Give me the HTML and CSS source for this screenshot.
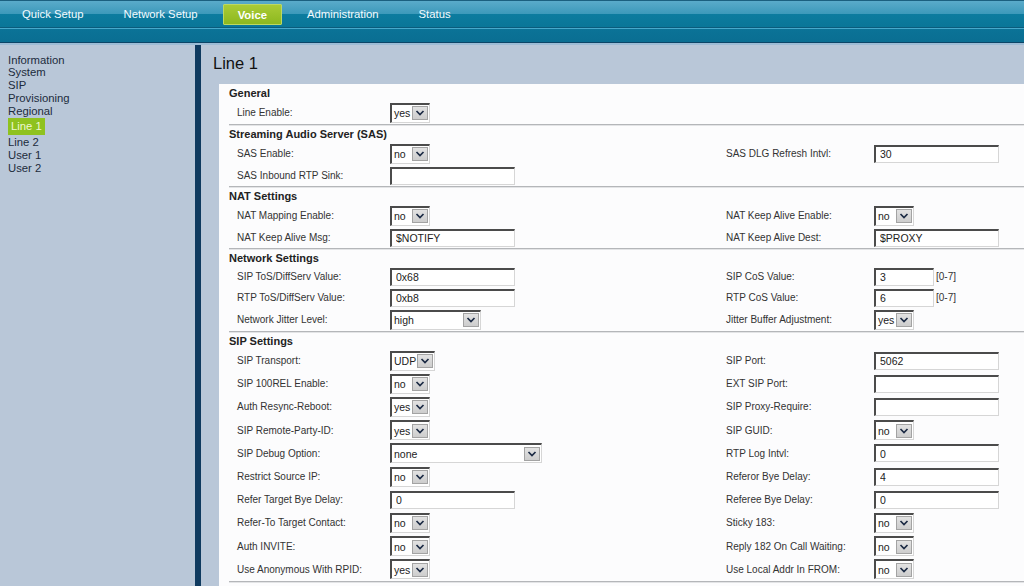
FILE: index.html
```html
<!DOCTYPE html>
<html>
<head>
<meta charset="utf-8">
<title>Line 1</title>
<link rel="stylesheet" href="styles.css">
</head>
<body>
<header class="topbar">
  <nav class="nav">
    <span class="nav-item">Quick Setup</span>
    <span class="nav-item">Network Setup</span>
    <span class="nav-item active">Voice</span>
    <span class="nav-item">Administration</span>
    <span class="nav-item">Status</span>
  </nav>
</header>
<div class="layout">
  <aside class="sidebar">
    <a class="side-link">Information</a>
    <a class="side-link">System</a>
    <a class="side-link">SIP</a>
    <a class="side-link">Provisioning</a>
    <a class="side-link">Regional</a>
    <a class="side-link current">Line 1</a>
    <a class="side-link">Line 2</a>
    <a class="side-link">User 1</a>
    <a class="side-link">User 2</a>
  </aside>
  <main class="main">
    <h1 class="title">Line 1</h1>
    <div class="panel">

      <section class="section">
        <h2 class="sec-head">General</h2>
        <div class="row">
          <span class="label">Line Enable:</span>
          <span class="ctl"><span class="sel w40"><span class="val">yes</span><span class="btn"><svg viewBox="0 0 14 12" width="14" height="12"><path d="M3.5 4 L7 7.5 L10.5 4" fill="none" stroke="#1b2a44" stroke-width="1.7"/></svg></span></span></span>
          <span class="label"></span><span class="ctl"></span>
        </div>
      </section>

      <section class="section">
        <h2 class="sec-head">Streaming Audio Server (SAS)</h2>
        <div class="row">
          <span class="label">SAS Enable:</span>
          <span class="ctl"><span class="sel w40"><span class="val">no</span><span class="btn"><svg viewBox="0 0 14 12" width="14" height="12"><path d="M3.5 4 L7 7.5 L10.5 4" fill="none" stroke="#1b2a44" stroke-width="1.7"/></svg></span></span></span>
          <span class="label">SAS DLG Refresh Intvl:</span>
          <span class="ctl"><input class="inp" value="30"></span>
        </div>
        <div class="row">
          <span class="label">SAS Inbound RTP Sink:</span>
          <span class="ctl"><input class="inp" value=""></span>
          <span class="label"></span><span class="ctl"></span>
        </div>
      </section>

      <section class="section">
        <h2 class="sec-head">NAT Settings</h2>
        <div class="row">
          <span class="label">NAT Mapping Enable:</span>
          <span class="ctl"><span class="sel w40"><span class="val">no</span><span class="btn"><svg viewBox="0 0 14 12" width="14" height="12"><path d="M3.5 4 L7 7.5 L10.5 4" fill="none" stroke="#1b2a44" stroke-width="1.7"/></svg></span></span></span>
          <span class="label">NAT Keep Alive Enable:</span>
          <span class="ctl"><span class="sel w40"><span class="val">no</span><span class="btn"><svg viewBox="0 0 14 12" width="14" height="12"><path d="M3.5 4 L7 7.5 L10.5 4" fill="none" stroke="#1b2a44" stroke-width="1.7"/></svg></span></span></span>
        </div>
        <div class="row">
          <span class="label">NAT Keep Alive Msg:</span>
          <span class="ctl"><input class="inp" value="$NOTIFY"></span>
          <span class="label">NAT Keep Alive Dest:</span>
          <span class="ctl"><input class="inp" value="$PROXY"></span>
        </div>
      </section>

      <section class="section">
        <h2 class="sec-head">Network Settings</h2>
        <div class="row">
          <span class="label">SIP ToS/DiffServ Value:</span>
          <span class="ctl"><input class="inp" value="0x68"></span>
          <span class="label">SIP CoS Value:</span>
          <span class="ctl"><input class="inp short" value="3"><span class="hint">[0-7]</span></span>
        </div>
        <div class="row">
          <span class="label">RTP ToS/DiffServ Value:</span>
          <span class="ctl"><input class="inp" value="0xb8"></span>
          <span class="label">RTP CoS Value:</span>
          <span class="ctl"><input class="inp short" value="6"><span class="hint">[0-7]</span></span>
        </div>
        <div class="row">
          <span class="label">Network Jitter Level:</span>
          <span class="ctl"><span class="sel w91"><span class="val">high</span><span class="btn"><svg viewBox="0 0 14 12" width="14" height="12"><path d="M3.5 4 L7 7.5 L10.5 4" fill="none" stroke="#1b2a44" stroke-width="1.7"/></svg></span></span></span>
          <span class="label">Jitter Buffer Adjustment:</span>
          <span class="ctl"><span class="sel w40"><span class="val">yes</span><span class="btn"><svg viewBox="0 0 14 12" width="14" height="12"><path d="M3.5 4 L7 7.5 L10.5 4" fill="none" stroke="#1b2a44" stroke-width="1.7"/></svg></span></span></span>
        </div>
      </section>

      <section class="section tall">
        <h2 class="sec-head">SIP Settings</h2>
        <div class="row">
          <span class="label">SIP Transport:</span>
          <span class="ctl"><span class="sel w45"><span class="val">UDP</span><span class="btn"><svg viewBox="0 0 14 12" width="14" height="12"><path d="M3.5 4 L7 7.5 L10.5 4" fill="none" stroke="#1b2a44" stroke-width="1.7"/></svg></span></span></span>
          <span class="label">SIP Port:</span>
          <span class="ctl"><input class="inp" value="5062"></span>
        </div>
        <div class="row">
          <span class="label">SIP 100REL Enable:</span>
          <span class="ctl"><span class="sel w40"><span class="val">no</span><span class="btn"><svg viewBox="0 0 14 12" width="14" height="12"><path d="M3.5 4 L7 7.5 L10.5 4" fill="none" stroke="#1b2a44" stroke-width="1.7"/></svg></span></span></span>
          <span class="label">EXT SIP Port:</span>
          <span class="ctl"><input class="inp" value=""></span>
        </div>
        <div class="row">
          <span class="label">Auth Resync-Reboot:</span>
          <span class="ctl"><span class="sel w40"><span class="val">yes</span><span class="btn"><svg viewBox="0 0 14 12" width="14" height="12"><path d="M3.5 4 L7 7.5 L10.5 4" fill="none" stroke="#1b2a44" stroke-width="1.7"/></svg></span></span></span>
          <span class="label">SIP Proxy-Require:</span>
          <span class="ctl"><input class="inp" value=""></span>
        </div>
        <div class="row">
          <span class="label">SIP Remote-Party-ID:</span>
          <span class="ctl"><span class="sel w40"><span class="val">yes</span><span class="btn"><svg viewBox="0 0 14 12" width="14" height="12"><path d="M3.5 4 L7 7.5 L10.5 4" fill="none" stroke="#1b2a44" stroke-width="1.7"/></svg></span></span></span>
          <span class="label">SIP GUID:</span>
          <span class="ctl"><span class="sel w40"><span class="val">no</span><span class="btn"><svg viewBox="0 0 14 12" width="14" height="12"><path d="M3.5 4 L7 7.5 L10.5 4" fill="none" stroke="#1b2a44" stroke-width="1.7"/></svg></span></span></span>
        </div>
        <div class="row">
          <span class="label">SIP Debug Option:</span>
          <span class="ctl"><span class="sel w152"><span class="val">none</span><span class="btn"><svg viewBox="0 0 14 12" width="14" height="12"><path d="M3.5 4 L7 7.5 L10.5 4" fill="none" stroke="#1b2a44" stroke-width="1.7"/></svg></span></span></span>
          <span class="label">RTP Log Intvl:</span>
          <span class="ctl"><input class="inp" value="0"></span>
        </div>
        <div class="row">
          <span class="label">Restrict Source IP:</span>
          <span class="ctl"><span class="sel w40"><span class="val">no</span><span class="btn"><svg viewBox="0 0 14 12" width="14" height="12"><path d="M3.5 4 L7 7.5 L10.5 4" fill="none" stroke="#1b2a44" stroke-width="1.7"/></svg></span></span></span>
          <span class="label">Referor Bye Delay:</span>
          <span class="ctl"><input class="inp" value="4"></span>
        </div>
        <div class="row">
          <span class="label">Refer Target Bye Delay:</span>
          <span class="ctl"><input class="inp" value="0"></span>
          <span class="label">Referee Bye Delay:</span>
          <span class="ctl"><input class="inp" value="0"></span>
        </div>
        <div class="row">
          <span class="label">Refer-To Target Contact:</span>
          <span class="ctl"><span class="sel w40"><span class="val">no</span><span class="btn"><svg viewBox="0 0 14 12" width="14" height="12"><path d="M3.5 4 L7 7.5 L10.5 4" fill="none" stroke="#1b2a44" stroke-width="1.7"/></svg></span></span></span>
          <span class="label">Sticky 183:</span>
          <span class="ctl"><span class="sel w40"><span class="val">no</span><span class="btn"><svg viewBox="0 0 14 12" width="14" height="12"><path d="M3.5 4 L7 7.5 L10.5 4" fill="none" stroke="#1b2a44" stroke-width="1.7"/></svg></span></span></span>
        </div>
        <div class="row">
          <span class="label">Auth INVITE:</span>
          <span class="ctl"><span class="sel w40"><span class="val">no</span><span class="btn"><svg viewBox="0 0 14 12" width="14" height="12"><path d="M3.5 4 L7 7.5 L10.5 4" fill="none" stroke="#1b2a44" stroke-width="1.7"/></svg></span></span></span>
          <span class="label">Reply 182 On Call Waiting:</span>
          <span class="ctl"><span class="sel w40"><span class="val">no</span><span class="btn"><svg viewBox="0 0 14 12" width="14" height="12"><path d="M3.5 4 L7 7.5 L10.5 4" fill="none" stroke="#1b2a44" stroke-width="1.7"/></svg></span></span></span>
        </div>
        <div class="row">
          <span class="label">Use Anonymous With RPID:</span>
          <span class="ctl"><span class="sel w40"><span class="val">yes</span><span class="btn"><svg viewBox="0 0 14 12" width="14" height="12"><path d="M3.5 4 L7 7.5 L10.5 4" fill="none" stroke="#1b2a44" stroke-width="1.7"/></svg></span></span></span>
          <span class="label">Use Local Addr In FROM:</span>
          <span class="ctl"><span class="sel w40"><span class="val">no</span><span class="btn"><svg viewBox="0 0 14 12" width="14" height="12"><path d="M3.5 4 L7 7.5 L10.5 4" fill="none" stroke="#1b2a44" stroke-width="1.7"/></svg></span></span></span>
        </div>
      </section>

    </div>
  </main>
</div>
</body>
</html>
```

FILE: styles.css
```css
html, body {
  margin: 0;
  padding: 0;
  overflow: hidden;
  height: 100%;
}
body {
  font-family: "Liberation Sans", Arial, sans-serif;
  background: #b9c7d8;
  color: #222;
}

/* ---------- top bar ---------- */
.topbar {
  height: 43px;
  border-bottom: 2px solid #9dbcd5;
  background: linear-gradient(to bottom,
    #1b607f 0, #1b607f 1px,
    #5aabca 1px, #3c99ba 14px,
    #0c7c9f 14px, #0a7698 27px,
    #0b5c7c 27px, #0b5c7c 28px,
    #48a9cb 28px, #48a9cb 29px,
    #0b7397 29px, #0a6e92 42px,
    #0c4567 42px, #0c4567 43px);
}
.nav {
  display: flex;
  align-items: center;
  gap: 40px;
  height: 28px;
  padding-left: 22px;
}
.nav-item {
  color: #f4fbff;
  font-size: 11.3px;
  white-space: nowrap;
}
.nav-item.active {
  font-weight: bold;
  height: 21px;
  line-height: 21px;
  padding: 0 14px;
  margin: 0 -15px;
  border: 1px solid #bcd862;
  border-radius: 1px;
  box-sizing: border-box;
  background: linear-gradient(to bottom, #a9cb36, #8db81f);
  color: #ffffff;
}

/* ---------- layout ---------- */
.layout {
  display: flex;
  min-height: calc(100% - 45px);
}
.sidebar {
  flex: none;
  width: 201px;
  border-right: 6px solid #0f3a5f;
  background: #b9c7d8;
  padding: 8.5px 0 0 8px;
  box-sizing: border-box;
  display: flex;
  flex-direction: column;
  align-items: flex-start;
}
.side-link {
  font-size: 11.3px;
  line-height: 12.8px;
  color: #1c2b3c;
}
.side-link.current {
  background: #8fc21f;
  color: #eef8d2;
  padding: 2px 3px;
  margin: 1px 0;
}
.main {
  flex: 1;
  background: #b9c7d8;
  min-width: 0;
}
.title {
  margin: 8px 0 11px 12px;
  font-size: 16.5px;
  line-height: 20px;
  font-weight: normal;
  color: #111;
}
.panel {
  margin-left: 18px;
  background: #fcfcfd;
  padding-bottom: 40px;
}

/* ---------- sections ---------- */
.section {
  margin-left: 10px;
  border-bottom: 1px solid #b4b6b9;
  box-shadow: 0 1px 0 #e3e4e6;
}
.sec-head {
  margin: 0;
  padding-top: 1px;
  height: 17px;
  line-height: 16px;
  box-sizing: border-box;
  font-size: 11px;
  font-weight: bold;
  color: #222;
}
.row {
  display: grid;
  grid-template-columns: 153px 336px 148px 1fr;
  align-items: center;
  padding: 1.5px 0 1.5px 8px;
}
.tall .row {
  min-height: 23.2px;
  box-sizing: border-box;
}
.label {
  font-size: 10px;
  color: #333;
  white-space: nowrap;
}
.ctl {
  display: flex;
  align-items: center;
}

/* ---------- controls ---------- */
.inp {
  display: block;
  width: 125px;
  height: 18px;
  margin: 0;
  box-sizing: border-box;
  border-style: solid;
  border-width: 2px 1px 1px 2px;
  border-color: #4b4b4b #d6d6d6 #d6d6d6 #4b4b4b;
  background: #fff;
  padding: 0 0 0 4px;
  font-family: "Liberation Sans", Arial, sans-serif;
  font-size: 10.5px;
  color: #222;
  outline: none;
}
.inp.short {
  width: 60px;
}
.hint {
  margin-left: 2px;
  font-size: 10px;
  color: #333;
}
.sel {
  display: flex;
  align-items: center;
  justify-content: space-between;
  height: 20px;
  box-sizing: border-box;
  border-style: solid;
  border-width: 2px 1px 1px 2px;
  border-color: #4b4b4b #d6d6d6 #d6d6d6 #4b4b4b;
  background: #fff;
  padding: 0 1px 0 2px;
}
.w40 { width: 40px; }
.w45 { width: 45px; }
.w91 { width: 91px; }
.w152 { width: 152px; }
.val {
  font-size: 10.5px;
  color: #222;
  white-space: nowrap;
}
.btn {
  display: flex;
  align-items: center;
  justify-content: center;
  width: 16px;
  height: 14px;
  box-sizing: border-box;
  border: 1px solid #a3a3a3;
  background: linear-gradient(to bottom, #e2e2e2, #cdcdcd);
}
.btn svg {
  display: block;
}
```
